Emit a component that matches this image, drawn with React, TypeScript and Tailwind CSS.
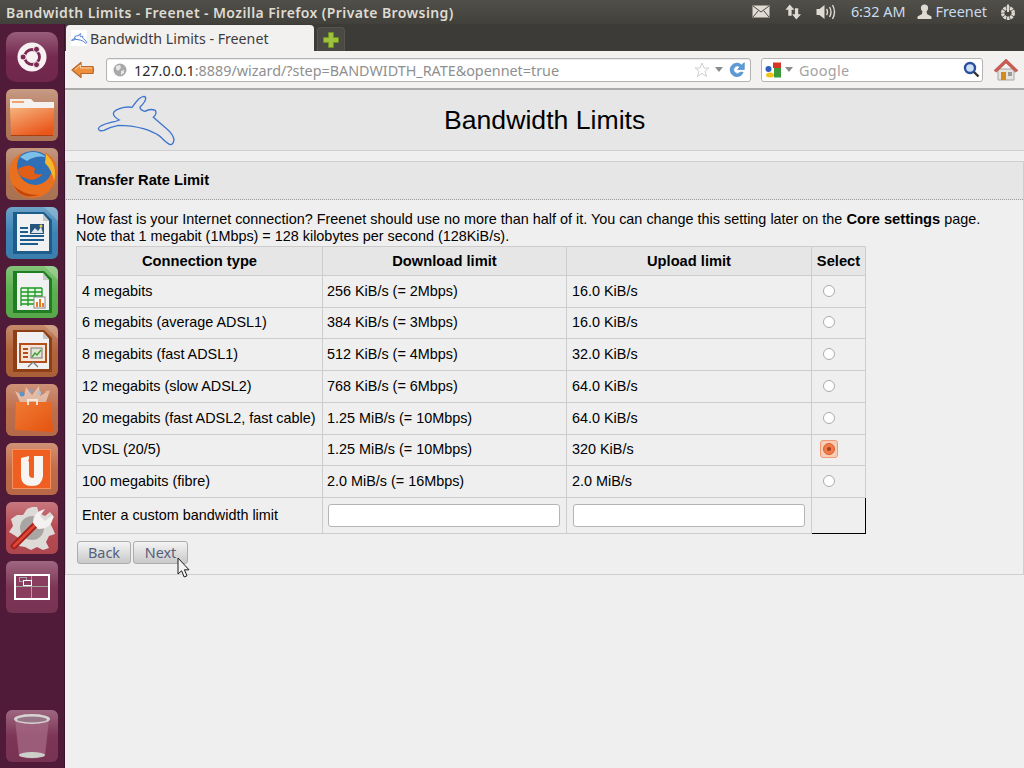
import type { ReactNode } from "react";

const RABBIT =
  "M295 383 Q298 373 330 365 Q352 360 358 357 Q340 348 340 337 Q342 326 372 319 Q388 317 396 319 Q405 305 417 293 Q432 282 437 290 Q438 302 420 318 Q420 328 435 331 Q450 322 466 328 Q472 338 460 349 Q478 365 500 383 Q520 400 522 416 Q520 432 510 431 Q498 425 480 406 Q460 392 430 383 Q395 373 355 373 Q330 378 312 388 Q297 392 295 383 Z";

const ROWS = [
  ["4 megabits", "256 KiB/s (= 2Mbps)", "16.0 KiB/s", "h-[32px]"],
  ["6 megabits (average ADSL1)", "384 KiB/s (= 3Mbps)", "16.0 KiB/s", "h-[31px]"],
  ["8 megabits (fast ADSL1)", "512 KiB/s (= 4Mbps)", "32.0 KiB/s", "h-[32px]"],
  ["12 megabits (slow ADSL2)", "768 KiB/s (= 6Mbps)", "64.0 KiB/s", "h-[32px]"],
  ["20 megabits (fast ADSL2, fast cable)", "1.25 MiB/s (= 10Mbps)", "64.0 KiB/s", "h-[32px]"],
  ["VDSL (20/5)", "1.25 MiB/s (= 10Mbps)", "320 KiB/s", "h-[31px]"],
  ["100 megabits (fibre)", "2.0 MiB/s (= 16Mbps)", "2.0 MiB/s", "h-[32px]"],
];

function Tile({ className, children }: { className: string; children: ReactNode }) {
  return (
    <div className={`relative w-[52px] shrink-0 overflow-hidden ${className}`}>
      <div className="absolute inset-0 bg-gradient-to-b from-white/25 via-white/0 to-black/5" />
      <div className="absolute inset-0 flex items-center justify-center">{children}</div>
    </div>
  );
}

function DocIcon({ band, children }: { band: string; children: ReactNode }) {
  return (
    <svg width="52" height="52" viewBox="0 0 52 52">
      <path d="M7 5H38L46 13V47H7Z" fill={band} />
      <path d="M11 7H37L43 14V44H11Z" fill="#f1f1f1" />
      <path d="M37 7L43 14H37Z" fill="#c8c8c8" />
      <path d="M38 0H52V14Z" fill="#ffffff" opacity="0.2" />
      {children}
    </svg>
  );
}

function Launcher() {
  return (
    <aside className="flex w-[65px] shrink-0 flex-col items-center border-r border-[#3a1229] bg-[#4f1b39] pb-[6px] pt-[8px]">
      <div className="flex w-full flex-col items-center gap-[7px] pr-[1px]">
        <Tile className="h-[50px] rounded-[10px] bg-[#75294f]">
          <svg width="30" height="30" viewBox="0 0 32 32">
            <circle cx="16" cy="16" r="15.5" fill="#f7f1f3" />
            <circle cx="16" cy="16" r="8" fill="none" stroke="#7a2a50" strokeWidth="3" />
            <circle cx="6.5" cy="16" r="3.2" fill="#7a2a50" stroke="#f7f1f3" />
            <circle cx="20.8" cy="7.8" r="3.2" fill="#7a2a50" stroke="#f7f1f3" />
            <circle cx="20.8" cy="24.2" r="3.2" fill="#7a2a50" stroke="#f7f1f3" />
          </svg>
        </Tile>
        <Tile className="h-[52px] rounded-[6px] bg-[#b47a5c]">
          <svg width="52" height="52" viewBox="0 0 52 52">
            <defs>
              <linearGradient id="folderBody" x1="0" y1="0" x2="0.6" y2="1">
                <stop offset="0" stopColor="#f6b27c" />
                <stop offset="1" stopColor="#e9561a" />
              </linearGradient>
            </defs>
            <path d="M4 10H25L28 13H48V21H4Z" fill="#f4f1ee" />
            <path d="M6 12H18V14H6Z" fill="#f0a36e" />
            <path d="M4 19H48L47 47H5Z" fill="url(#folderBody)" />
            <path d="M5 46H47V47H5Z" fill="#a8410f" />
          </svg>
        </Tile>
        <Tile className="h-[52px] rounded-[6px] bg-[#b07757]">
          <svg width="52" height="52" viewBox="0 0 52 52">
            <circle cx="27" cy="24" r="21" fill="#2f6fb5" />
            <path d="M14 9Q27 -1 40 9Q29 7 21 13Z" fill="#7cc0ea" />
            <path d="M4 30Q1 12 16 5Q9 14 12 24Q17 37 31 37Q45 34 46 20Q44 9 38 4Q54 12 50 30Q45 49 26 50Q8 49 4 30Z" fill="#e8701f" />
            <path d="M40 6Q52 17 48 33Q46 22 39 15Z" fill="#f7b72c" />
            <path d="M12 21Q24 14 29 21Q25 28 37 26Q28 35 19 30Q12 28 12 21Z" fill="#e25d16" />
            <path d="M7 37Q17 47 33 47Q20 51 12 44Z" fill="#c2470f" />
          </svg>
        </Tile>
        <Tile className="h-[52px] rounded-[6px] bg-[#3d84b6]">
          <DocIcon band="#1e5c8a">
            <path d="M14 20H22V22H14ZM14 24H22V26H14ZM14 28H38V30H14ZM14 32H38V34H14ZM14 36H32V38H14Z" fill="#1d5c8e" />
            <rect x="24" y="17" width="14" height="10" fill="#26567c" />
            <path d="M25 26L29 21L32 24L35 20L37 26Z" fill="#dfe6ea" />
            <circle cx="35" cy="19" r="1.5" fill="#f2c94c" />
          </DocIcon>
        </Tile>
        <Tile className="h-[52px] rounded-[6px] bg-[#5bb04d]">
          <DocIcon band="#1f7e24">
            <path d="M15 22H36V40H15Z" fill="#e8f4e4" />
            <path d="M15 22H36M15 26H36M15 30H36M15 34H36M15 38H32M15 22V40M22 22V40M29 22V40M36 22V32" stroke="#1b9a22" strokeWidth="1.3" fill="none" />
            <rect x="28" y="31" width="11" height="11" fill="#fbfbfb" stroke="#8a8a8a" />
            <path d="M30 41V36H32V41ZM33 41V33H35V41ZM36 41V37H38V41Z" fill="#e27c25" />
          </DocIcon>
        </Tile>
        <Tile className="h-[52px] rounded-[6px] bg-[#b2643a]">
          <DocIcon band="#8e3f16">
            <rect x="14" y="19" width="26" height="18" fill="#f6e6d8" stroke="#b5501d" strokeWidth="2" />
            <path d="M17 23H22V25H17ZM17 27H22V29H17ZM17 31H22V33H17Z" fill="#b5501d" />
            <rect x="25" y="23" width="11" height="10" fill="#dfe7d4" stroke="#777" />
            <path d="M26 32L29 28L31 30L35 25" stroke="#3f9a35" strokeWidth="1.3" fill="none" />
            <path d="M27 37L22 42M27 37L32 42" stroke="#777" strokeWidth="1.2" />
          </DocIcon>
        </Tile>
        <Tile className="h-[52px] rounded-[6px] bg-[#bd6e4c]">
          <svg width="52" height="52" viewBox="0 0 52 52">
            <defs>
              <linearGradient id="bagBody" x1="0" y1="0" x2="1" y2="1">
                <stop offset="0" stopColor="#f07a35" />
                <stop offset="1" stopColor="#e4540f" />
              </linearGradient>
            </defs>
            <path d="M14 18L9 7L18 12L20 3L26 11L33 2L34 12L44 6L40 18Z" fill="#fbeadc" opacity="0.55" />
            <circle cx="16" cy="10" r="2.5" fill="#5f93c8" />
            <circle cx="25" cy="7" r="2" fill="#8f9fc0" />
            <circle cx="33" cy="9" r="2.2" fill="#b5c0d0" />
            <circle cx="41" cy="8" r="1.6" fill="#e4b38a" />
            <path d="M10 18H45L47 48L9 46Z" fill="url(#bagBody)" />
            <path d="M22 21V16H31V21" stroke="#fbe9dc" strokeWidth="1.8" fill="none" />
          </svg>
        </Tile>
        <Tile className="h-[52px] rounded-[6px] bg-[#c06d49]">
          <div className="relative h-[40px] w-[39px] border border-[#f7925f] bg-[#ef5f22]">
            <svg width="37" height="38" viewBox="0 0 37 38" className="absolute inset-0">
              <path d="M8 8L16 6V24Q16 28 20 28Q21 28 21 26V6H30V26Q29 36 19 36Q8 36 8 26Z" fill="#f7f4f1" />
              <path d="M15 10L21 6V8L16 12Z" fill="#ef5f22" />
            </svg>
          </div>
        </Tile>
        <Tile className="h-[52px] rounded-[6px] bg-[#b64a53]">
          <svg width="46" height="46" viewBox="0 0 46 46">
            <path d="M23 2L28 2L30 8L36 11L41 7L45 12L41 18L44 24L46 29L40 31L37 37L40 43L34 45L28 42L22 45L16 42L10 41L11 34L5 30L0 27L4 21L2 14L8 10L14 10L18 4Z" fill="#dddad7" />
            <circle cx="23" cy="23" r="12" fill="#a9a5a2" />
            <path d="M5 41L26 20" stroke="#a8201c" strokeWidth="6.5" strokeLinecap="round" />
            <path d="M5 41L26 20" stroke="#dd4a36" strokeWidth="2.5" strokeLinecap="round" />
            <path d="M24 18Q24 7 36 4L31 11L36 16L44 10Q44 24 29 24Z" fill="#f4f2f0" />
          </svg>
        </Tile>
        <Tile className="h-[52px] rounded-[6px] bg-[#7e3557]">
          <div className="grid h-[26px] w-[36px] grid-cols-2 grid-rows-2 border-2 border-white bg-[#8a3d5f]">
            <div className="relative border-b border-r border-[#9cab9c]">
              <div className="absolute left-[3px] top-[1px] h-[5px] w-[8px] border border-[#a3a3a3]" />
              <div className="absolute left-[7px] top-[4px] h-[6px] w-[9px] border border-white bg-[#8a3d5f]" />
            </div>
            <div className="border-b border-[#9cab9c]" />
            <div className="border-r border-[#9cab9c]" />
            <div />
          </div>
        </Tile>
      </div>
      <div className="mt-auto pr-[1px]">
        <Tile className="h-[52px] rounded-[6px] bg-[#7e3557]">
          <svg width="40" height="48" viewBox="0 0 40 48">
            <path d="M3 7H37L33 44Q20 49 7 44Z" fill="#a66a84" opacity="0.75" />
            <ellipse cx="20" cy="7" rx="18" ry="5" fill="#d8d4d2" />
            <ellipse cx="20" cy="7.5" rx="15" ry="3" fill="#97768a" />
            <ellipse cx="20" cy="43" rx="13" ry="3" fill="#cdd0ca" />
          </svg>
        </Tile>
      </div>
    </aside>
  );
}

function TopBar() {
  return (
    <header className="flex h-[24px] shrink-0 items-center justify-between bg-gradient-to-b from-[#504f49] to-[#41403b] pl-[6px] pr-[8px] font-['Noto_Sans',sans-serif] text-[#dfdbd2]">
      <span className="whitespace-nowrap text-[14px] font-semibold tracking-[0.4px]">
        Bandwidth Limits - Freenet - Mozilla Firefox (Private Browsing)
      </span>
      <div className="flex items-center text-[14.4px]">
        <svg width="18" height="13" viewBox="0 0 18 13" className="mr-[15px]">
          <rect x="0.5" y="0.5" width="17" height="12" fill="#dfdbd2" />
          <path d="M1 1L9 7L17 1M1 12L6.5 5.5M17 12L11.5 5.5" stroke="#4a4944" fill="none" />
        </svg>
        <svg width="17" height="18" viewBox="0 0 18 18" className="mr-[13px]">
          <path d="M5 1L10 6.5H7V13H3.5V6.5H0.5Z" fill="#dfdbd2" />
          <path d="M12 17L7.5 11.5H10.5V5H14V11.5H17Z" fill="#dfdbd2" />
        </svg>
        <svg width="21" height="18" viewBox="0 0 20 18" className="mr-[15px]">
          <path d="M1 6H4L9 2V16L4 12H1Z" fill="#dfdbd2" />
          <path d="M11 6Q13 9 11 12M14 4Q17 9 14 14M17 2Q21 9 17 16" stroke="#dfdbd2" strokeWidth="1.4" fill="none" />
        </svg>
        <span className="mr-[12px] whitespace-nowrap text-[#c9dcef]">6:32 AM</span>
        <svg width="15" height="15" viewBox="0 0 14 15" className="mr-[3px]">
          <circle cx="7" cy="4" r="3.6" fill="#dfdbd2" />
          <path d="M5 7H9L9.5 10L14 12.5V15H0V12.5L4.5 10Z" fill="#dfdbd2" />
        </svg>
        <span className="mr-[13px] whitespace-nowrap text-[#c9dcef]">Freenet</span>
        <svg width="16" height="16" viewBox="0 0 16 16">
          <circle cx="8" cy="9" r="5.3" fill="none" stroke="#dfdbd2" strokeWidth="3.4" strokeDasharray="2.6 0.7" />
          <path d="M8 0.5V8" stroke="#dfdbd2" strokeWidth="2" />
        </svg>
      </div>
    </header>
  );
}

function Rabbit({ width, height, strokeWidth }: { width: number; height: number; strokeWidth: number }) {
  return (
    <svg width={width} height={height} viewBox="288 279 240 159" className="shrink-0">
      <path d={RABBIT} fill="none" stroke="#3f74d0" strokeWidth={strokeWidth} />
    </svg>
  );
}

function TabBar() {
  return (
    <div className="flex h-[27px] shrink-0 items-end bg-[#3c3b37] pl-[1px]">
      <div className="flex h-[26px] w-[248px] items-center gap-[3px] rounded-t-[4px] bg-[#f2f1f0] pl-[5px] font-['Noto_Sans',sans-serif] text-[14.2px] text-[#3c3c3c]">
        <div className="flex h-[16px] w-[16px] items-center justify-center bg-white">
          <Rabbit width={16} height={11} strokeWidth={14} />
        </div>
        <span className="pt-[2px]">Bandwidth Limits - Freenet</span>
      </div>
      <div className="ml-[3px] flex h-[24px] w-[28px] items-center justify-center rounded-t-[4px] border border-b-0 border-[#55544e] bg-[#4a4944]">
        <svg width="16" height="16" viewBox="0 0 16 16">
          <path d="M5.5 0.5H10.5V5.5H15.5V10.5H10.5V15.5H5.5V10.5H0.5V5.5H5.5Z" fill="#9fc23c" stroke="#6f8f22" />
        </svg>
      </div>
    </div>
  );
}

function NavBar() {
  return (
    <div className="flex h-[39px] shrink-0 items-center border-b-2 border-[#adabaa] bg-[#f2f1f0] pl-[6px] pr-[6px] font-['Noto_Sans',sans-serif]">
      <svg width="24" height="18" viewBox="0 0 24 18" className="shrink-0">
        <path d="M1 9L10 1.5V5.5H22Q23 9 22 12.5H10V16.5Z" fill="#ee8f3e" stroke="#b9672a" strokeWidth="1.2" strokeLinejoin="round" />
        <path d="M4 8.5L9.5 4V7H21" stroke="#fbd4aa" fill="none" />
      </svg>
      <div className="ml-[11px] flex h-[24px] w-[645px] shrink-0 items-center rounded-[3px] border border-[#b5b3b1] bg-white pl-[6px] pr-[4px] shadow-[inset_0_1px_1px_rgba(0,0,0,0.08)]">
        <svg width="14" height="14" viewBox="0 0 14 14" className="shrink-0">
          <circle cx="7" cy="7" r="6.5" fill="#a9a9a9" />
          <path d="M3 3L7 2L8 5L5 8L3 6ZM8 8L11 7L11 10L8 12Z" fill="#e6e6e6" />
        </svg>
        <span className="ml-[7px] flex-1 whitespace-nowrap pt-[2px] text-[14.35px] text-[#8f8f8f]">
          <span className="text-[#2b2b2b]">127.0.0.1</span>:8889/wizard/?step=BANDWIDTH_RATE&amp;opennet=true
        </span>
        <svg width="16" height="16" viewBox="0 0 16 16" className="shrink-0">
          <path d="M8 1L10 6H15L11 9.2L12.5 14.5L8 11.4L3.5 14.5L5 9.2L1 6H6Z" fill="#fff" stroke="#cfcfcf" />
        </svg>
        <span className="ml-[5px] h-0 w-0 border-x-[4px] border-t-[5px] border-x-transparent border-t-[#8b8b8b]" />
        <svg width="18" height="18" viewBox="0 0 16 16" className="ml-[5px] shrink-0">
          <path d="M13.5 10A6 6 0 1 1 12 3.5L14.5 1.5V7.5H8.5L10.6 5.4A3.3 3.3 0 1 0 10.8 10Z" fill="#5b9bd8" stroke="#3d7cbc" strokeWidth="0.5" />
        </svg>
      </div>
      <div className="ml-[10px] flex h-[24px] w-[222px] shrink-0 items-center rounded-[3px] border border-[#b5b3b1] bg-white pl-[3px] pr-[2px]">
        <svg width="16" height="16" viewBox="0 0 16 16" className="shrink-0">
          <rect x="8" y="0.5" width="8" height="5.5" fill="#d8352a" />
          <rect x="9" y="6" width="7" height="9.5" fill="#3a9a3a" />
          <circle cx="3.5" cy="7" r="3" fill="#2f5fc0" />
          <ellipse cx="5" cy="13" rx="4" ry="2.5" fill="#f2c218" />
        </svg>
        <span className="ml-[4px] h-0 w-0 border-x-[4px] border-t-[5px] border-x-transparent border-t-[#8b8b8b]" />
        <span className="ml-[6px] flex-1 pt-[2px] text-[14.4px] tracking-[0.3px] text-[#a3a3a3]">Google</span>
        <svg width="17" height="17" viewBox="0 0 17 17" className="shrink-0">
          <circle cx="7" cy="7" r="5" fill="#cfe0f5" stroke="#2c4f9e" strokeWidth="2.4" />
          <path d="M11 11L15.5 15.5" stroke="#333" strokeWidth="2.4" />
        </svg>
      </div>
      <svg width="24" height="24" viewBox="0 0 24 24" className="ml-[11px] shrink-0">
        <path d="M4 11H20V22H4Z" fill="#e6e4e0" stroke="#a8a6a2" />
        <path d="M12 1L24 12.5L21.5 14L12 5L2.5 14L0 12.5Z" fill="#cf5a52" stroke="#a2403a" strokeWidth="0.5" />
        <rect x="7" y="14" width="5" height="8" fill="#d58a1c" />
        <rect x="14" y="14" width="4" height="4" fill="#9a9a9a" />
      </svg>
    </div>
  );
}

function Radio({ checked }: { checked?: boolean }) {
  if (checked) {
    return (
      <span className="flex h-[18px] w-[18px] items-center justify-center rounded-[3px] border border-[#f39a75] bg-[#f6cdb8]">
        <span className="flex h-[12px] w-[12px] items-center justify-center rounded-full border border-[#d9602e] bg-[#f07a48]">
          <span className="h-[4px] w-[4px] rounded-full bg-[#9c3f1c]" />
        </span>
      </span>
    );
  }
  return <span className="ml-[3px] block h-[12px] w-[12px] rounded-full border border-[#ababab] bg-white" />;
}

function RateTable() {
  const cell = "border border-[#cdcdcd] pl-[5px] align-middle";
  const cellTight = "border border-[#cdcdcd] pl-[4px] align-middle";
  const head = "border border-[#cdcdcd] bg-[#e6e6e6] px-[3px] text-center text-[14.7px] font-bold align-middle";
  return (
    <table className="mt-[1px] w-[789px] table-fixed border-collapse">
      <colgroup>
        <col className="w-[246px]" />
        <col className="w-[244px]" />
        <col className="w-[245px]" />
        <col className="w-[54px]" />
      </colgroup>
      <thead>
        <tr className="h-[29px]">
          <th className={head}>Connection type</th>
          <th className={head}>Download limit</th>
          <th className={head}>Upload limit</th>
          <th className={head}>Select</th>
        </tr>
      </thead>
      <tbody>
        {ROWS.map((r) => (
          <tr key={r[0]} className={r[3]}>
            <td className={cell}>{r[0]}</td>
            <td className={cellTight}>{r[1]}</td>
            <td className={cell}>{r[2]}</td>
            <td className="border border-[#cdcdcd] pb-[2px] pl-[8px] align-middle">
              <Radio checked={r[0] === "VDSL (20/5)"} />
            </td>
          </tr>
        ))}
        <tr className="h-[36px]">
          <td className={cell}>Enter a custom bandwidth limit</td>
          <td className={cell}>
            <input className="block h-[23px] w-[232px] rounded-[3px] border border-[#b5b5b5] bg-white" />
          </td>
          <td className="border border-[#cdcdcd] pl-[6px] align-middle">
            <input className="block h-[23px] w-[232px] rounded-[3px] border border-[#b5b5b5] bg-white" />
          </td>
          <td className="border-b border-r border-b-black border-r-black" />
        </tr>
      </tbody>
    </table>
  );
}

function WizardButton({ label, width }: { label: string; width: string }) {
  return (
    <button
      className={`h-[23px] ${width} rounded-[3px] border border-[#adadad] bg-gradient-to-b from-[#f4f4f4] to-[#c9c9c9] pb-[2px] font-['Noto_Sans',sans-serif] text-[14.4px] text-[#56607a]`}
    >
      {label}
    </button>
  );
}

function Page() {
  return (
    <main className="relative min-h-0 flex-1 bg-[#efefef] font-['Liberation_Sans',sans-serif] text-[14.4px] text-black">
      <div className="flex h-[61px] items-center border-b border-[#cfcfcf] bg-[#e6e6e6]">
        <div className="ml-[31px]">
          <Rabbit width={80} height={53} strokeWidth={4} />
        </div>
        <h1 className="ml-[268px] whitespace-nowrap text-[26.64px] leading-none">Bandwidth Limits</h1>
      </div>
      <section className="mt-[10px] border border-[#cfcfcf]">
        <h2 className="flex h-[38px] items-center border-b border-dotted border-[#9a9a9a] bg-[#e6e6e6] pl-[10px] text-[14.7px] font-bold">
          Transfer Rate Limit
        </h2>
        <div className="pb-[10px] pl-[10px] pt-[11px]">
          <p className="leading-[17px]">
            How fast is your Internet connection? Freenet should use no more than half of it. You can change this
            setting later on the <strong className="text-[14.7px]">Core settings</strong> page.
            <br />
            Note that 1 megabit (1Mbps) = 128 kilobytes per second (128KiB/s).
          </p>
          <RateTable />
          <div className="ml-[1px] mt-[7px] flex gap-[2px]">
            <WizardButton label="Back" width="w-[54px]" />
            <WizardButton label="Next" width="w-[55px]" />
          </div>
        </div>
      </section>
      <svg width="14" height="22" viewBox="0 0 14 22" className="absolute left-[112px] top-[467px]">
        <path d="M1 1V17L4.6 13.8L7.2 20L10 18.8L7.4 12.8H12Z" fill="#f4f4f4" stroke="#1a1a1a" strokeWidth="1" />
      </svg>
    </main>
  );
}

export default function App() {
  return (
    <div className="flex h-[768px] w-[1024px] flex-col overflow-hidden bg-[#3c3b37]">
      <TopBar />
      <div className="flex min-h-0 flex-1">
        <Launcher />
        <div className="flex min-w-0 flex-1 flex-col">
          <TabBar />
          <NavBar />
          <Page />
        </div>
      </div>
    </div>
  );
}
